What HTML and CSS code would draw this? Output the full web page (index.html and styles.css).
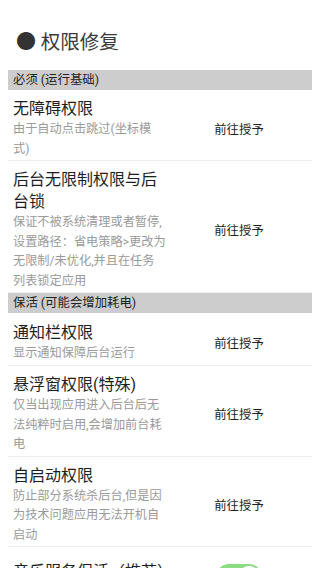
FILE: index.html
```html
<!DOCTYPE html>
<html lang="zh-CN">
<head>
<meta charset="utf-8">
<meta name="viewport" content="width=device-width, initial-scale=1">
<title>权限修复</title>
<link rel="stylesheet" href="styles.css">
</head>
<body>
<div class="page">
  <h1 class="heading"><span class="dot">●</span> 权限修复</h1>

  <div class="section">必须 (运行基础)</div>

  <div class="row">
    <div class="info">
      <div class="title">无障碍权限</div>
      <div class="desc">由于自动点击跳过(坐标模式)</div>
    </div>
    <div class="action">前往授予</div>
  </div>

  <div class="row">
    <div class="info">
      <div class="title">后台无限制权限与后台锁</div>
      <div class="desc">保证不被系统清理或者暂停,设置路径：省电策略&gt;更改为无限制/未优化,并且在任务列表锁定应用</div>
    </div>
    <div class="action">前往授予</div>
  </div>

  <div class="section">保活 (可能会增加耗电)</div>

  <div class="row">
    <div class="info">
      <div class="title">通知栏权限</div>
      <div class="desc">显示通知保障后台运行</div>
    </div>
    <div class="action">前往授予</div>
  </div>

  <div class="row">
    <div class="info">
      <div class="title">悬浮窗权限(特殊)</div>
      <div class="desc">仅当出现应用进入后台后无法纯粹时启用,会增加前台耗电</div>
    </div>
    <div class="action">前往授予</div>
  </div>

  <div class="row">
    <div class="info">
      <div class="title">自启动权限</div>
      <div class="desc">防止部分系统杀后台,但是因为技术问题应用无法开机自启动</div>
    </div>
    <div class="action">前往授予</div>
  </div>

  <div class="row row-switch">
    <div class="info">
      <div class="title">音乐服务保活（推荐）</div>
    </div>
    <div class="action">
      <span class="switch on"><span class="knob"></span></span>
    </div>
  </div>
</div>
</body>
</html>
```

FILE: styles.css
```css
html, body {
  margin: 0;
  padding: 0;
  background: #ffffff;
  height: 568px;
  overflow: hidden;
}

body {
  font-family: Roboto, "Noto Sans CJK SC", sans-serif;
  color: #222222;
}

.page {
  padding: 0 8px;
}

.heading {
  margin: 0;
  padding: 28px 0 13px 8px;
  font-size: 19.5px;
  line-height: 28px;
  font-weight: normal;
  color: #3a3a3a;
}

.dot {
  font-size: 20px;
  color: #333333;
}

.section {
  background: #cdcdcd;
  height: 20px;
  line-height: 20px;
  padding-left: 5px;
  font-size: 12.4px;
  color: #222222;
}

.row {
  display: flex;
  align-items: center;
  min-height: 43px;
  padding: 8px 0 1px 5px;
  border-bottom: 1px solid #eeeeee;
}

.info {
  width: 153px;
  flex: none;
}

.title {
  font-size: 16px;
  line-height: 22px;
  color: #1e1e1e;
}

.desc {
  font-size: 12.2px;
  line-height: 19.5px;
  color: #9a9a9a;
}

.action {
  flex: 1;
  text-align: center;
  font-size: 12.4px;
  color: #222222;
}

.row-switch {
  align-items: flex-start;
  padding-top: 14px;
  border-bottom: none;
}

.switch {
  display: inline-block;
  margin-top: 3px;
  width: 46px;
  height: 26px;
  border-radius: 13px;
  background: #8cdc82;
  position: relative;
  vertical-align: top;
}

.switch .knob {
  position: absolute;
  right: 2px;
  top: 2px;
  width: 22px;
  height: 22px;
  border-radius: 50%;
  background: #ffffff;
}
```
